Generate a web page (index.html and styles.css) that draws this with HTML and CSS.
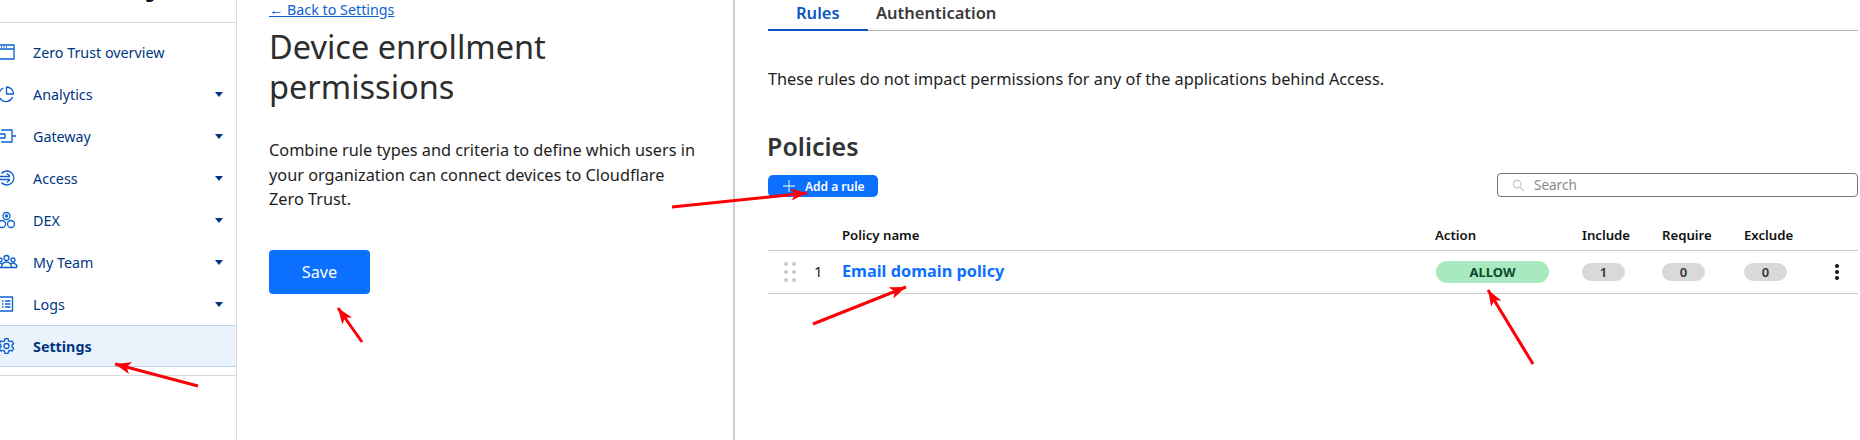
FILE: index.html
```html
<!DOCTYPE html>
<html lang="en">
<head>
  <meta charset="UTF-8" />
  <title>Device enrollment permissions</title>
  <link rel="stylesheet" href="styles.css">
</head>
<body>

<div class="layout">
  <nav class="sidebar">
    <div class="brand"><span class="brand-text">g</span></div>
    <ul class="nav-list">
      <li class="nav-item">
        <svg class="nav-icon" viewBox="0 0 24 24"><path d="M-6 5h20v14H-6z M-6 9h20 M1 7h1 M3.500 7h1 M6 7h1"/></svg>
        <span class="nav-label">Zero Trust overview</span>
      </li>
      <li class="nav-item">
        <svg class="nav-icon" viewBox="0 0 24 24"><path d="M3.500 6A7 7 0 1 0 12.500 15 M6.500 5v7h7a7 7 0 0 0-7-7z"/></svg>
        <span class="nav-label">Analytics</span><span class="caret"></span>
      </li>
      <li class="nav-item">
        <svg class="nav-icon" viewBox="0 0 24 24"><path d="M2 7v-1h10v12H2v-1 M12 12h4 M-6 10h11v4H-6"/></svg>
        <span class="nav-label">Gateway</span><span class="caret"></span>
      </li>
      <li class="nav-item">
        <svg class="nav-icon" viewBox="0 0 24 24"><path d="M1.500 7.500a7 7 0 1 1 0 9 M-2 10.500h12 M-2 13.500h12 M7 7.500l3 3 M7 16.500l3-3"/></svg>
        <span class="nav-label">Access</span><span class="caret"></span>
      </li>
      <li class="nav-item">
        <svg class="nav-icon" viewBox="0 0 24 24"><circle cx="6.500" cy="8" r="3.500"/><circle cx="6.500" cy="8" r="1"/><circle cx="2" cy="16" r="3.500"/><circle cx="11" cy="16" r="3.500"/></svg>
        <span class="nav-label">DEX</span><span class="caret"></span>
      </li>
      <li class="nav-item">
        <svg class="nav-icon" viewBox="0 0 24 24"><circle cx="0" cy="10" r="2"/><circle cx="6.500" cy="8" r="2.500"/><circle cx="13" cy="10" r="2"/><path d="M-4 17a4 4 0 0 1 7-2.500 M1.500 17a5 5 0 0 1 10 0 M10 14.500a4 4 0 0 1 7 2.500 M-4 17.500h21"/></svg>
        <span class="nav-label">My Team</span><span class="caret"></span>
      </li>
      <li class="nav-item">
        <svg class="nav-icon" viewBox="0 0 24 24"><path d="M-2 5h14.500v14H-2z M2 9h1.500 M5 9h5.500 M2 12h1.500 M5 12h5.500 M2 15h1.500 M5 15h5.500"/></svg>
        <span class="nav-label">Logs</span><span class="caret"></span>
      </li>
      <li class="nav-item nav-item-active">
        <svg class="nav-icon" viewBox="0 0 24 24"><circle cx="6.500" cy="12" r="2.500"/><path d="M4.440 6.900L4.940 4.660H8.060L8.560 6.900L9.890 7.670L12.070 6.980L13.630 9.680L11.950 11.230V12.770L13.630 14.320L12.070 17.020L9.890 16.330L8.560 17.100L8.060 19.340H4.940L4.440 17.100L3.110 16.330L0.930 17.020L-0.630 14.320L1.050 12.770V11.230L-0.630 9.680L0.930 6.980L3.110 7.670z"/></svg>
        <span class="nav-label">Settings</span>
      </li>
    </ul>
  </nav>

  <section class="intro">
    <a class="back-link" href="#">← Back to Settings</a>
    <h1>Device enrollment permissions</h1>
    <p class="intro-text">Combine rule types and criteria to define which users in your organization can connect devices to Cloudflare Zero Trust.</p>
    <button class="save-btn">Save</button>
  </section>

  <main class="content">
    <div class="tabs">
      <span class="tab tab-active">Rules</span>
      <span class="tab">Authentication</span>
    </div>
    <p class="note">These rules do not impact permissions for any of the applications behind Access.</p>
    <h2>Policies</h2>
    <div class="toolbar">
      <button class="add-btn">
        <svg class="plus-icon" viewBox="0 0 12 12"><path d="M6 0v12M0 6h12"/></svg>
        Add a rule
      </button>
      <div class="search">
        <svg class="search-icon" viewBox="0 0 14 14"><circle cx="5.500" cy="5.500" r="4"/><path d="M8.500 8.500L13 13"/></svg>
        <span>Search</span>
      </div>
    </div>
    <div class="row row-head">
      <span class="col-drag"></span>
      <span class="col-num"></span>
      <span class="col-name">Policy name</span>
      <span class="col-action">Action</span>
      <span class="col-include">Include</span>
      <span class="col-require">Require</span>
      <span class="col-exclude">Exclude</span>
    </div>
    <div class="row">
      <span class="col-drag"><span class="drag-dots"><i></i><i></i><i></i><i></i><i></i><i></i></span></span>
      <span class="col-num row-text">1</span>
      <a class="col-name policy-link row-text" href="#">Email domain policy</a>
      <span class="col-action"><span class="allow-pill">ALLOW</span></span>
      <span class="col-include"><span class="count-pill">1</span></span>
      <span class="col-require"><span class="count-pill">0</span></span>
      <span class="col-exclude"><span class="count-pill">0</span></span>
      <span class="kebab"><i></i><i></i><i></i></span>
    </div>
  </main>
</div>

<!-- red annotation arrows drawn over the screenshot -->
<svg class="arrows" viewBox="0 0 1860 440">
  <defs>
    <marker id="head" markerWidth="16" markerHeight="12" refX="16" refY="6" orient="auto" markerUnits="userSpaceOnUse">
      <path d="M0 0L16 6L0 12L4 6z"/>
    </marker>
  </defs>
  <path d="M198 386L115 364" marker-end="url(#head)"/>
  <path d="M362 342L338 308" marker-end="url(#head)"/>
  <path d="M672 207L807 193" marker-end="url(#head)"/>
  <path d="M813 324L906 287" marker-end="url(#head)"/>
  <path d="M1533 364L1488 290" marker-end="url(#head)"/>
</svg>

</body>
</html>
```

FILE: styles.css
```css
* {
  box-sizing: border-box;
}

html,
body {
  height: 100%;
}

body {
  margin: 0;
  font-family: 'Noto Sans', 'Open Sans', sans-serif;
  background: #ffffff;
  color: #1d1d1d;
  overflow: hidden;
  position: relative;
}

.layout {
  display: flex;
  height: 440px;
}

/* sidebar */
.sidebar {
  width: 237px;
  flex-shrink: 0;
  border-right: 1px solid #d9d9d9;
}

.brand {
  height: 23px;
  padding-left: 145px;
  border-bottom: 1px solid #d9d9d9;
  overflow: hidden;
}

.brand-text {
  display: block;
  margin-top: -16px;
  font-size: 16px;
  line-height: 16px;
  font-weight: 700;
  color: #111111;
}

.nav-list {
  list-style: none;
  margin: 0;
  padding: 8px 0;
  border-bottom: 1px solid #d9d9d9;
}

.nav-item {
  display: flex;
  align-items: center;
  height: 42px;
  padding-right: 13px;
  font-size: 14.300px;
  color: #003681;
}

.nav-icon {
  width: 24px;
  height: 24px;
  margin-right: 9px;
  overflow: visible;
  fill: none;
  stroke: #0a5fd0;
  stroke-width: 1.300;
  stroke-linejoin: round;
  flex-shrink: 0;
}

.nav-label {
  flex: 1;
}

.caret {
  width: 0;
  height: 0;
  border-left: 4.500px solid transparent;
  border-right: 4.500px solid transparent;
  border-top: 5px solid #003681;
}

.nav-item-active {
  background: #eaf2fc;
  border-top: 1px solid #bcd6f6;
  border-bottom: 1px solid #bcd6f6;
  font-weight: 700;
}

/* left column */
.intro {
  width: 498px;
  flex-shrink: 0;
  padding: 0 34px 0 32px;
  border-right: 2px solid #d0d0d0;
}

.back-link {
  display: block;
  font-size: 14.300px;
  line-height: 19px;
  color: #0b62d6;
}

h1 {
  margin: 8px 0 0;
  font-size: 32.500px;
  font-weight: 400;
  line-height: 40px;
  color: #2d2d2d;
}

.intro-text {
  margin: 31px 0 0;
  font-size: 16.300px;
  line-height: 24.500px;
}

.save-btn {
  display: block;
  margin-top: 38px;
  width: 101px;
  height: 44px;
  border: none;
  border-radius: 4px;
  background: #0b6fff;
  color: #ffffff;
  font-family: inherit;
  font-size: 16.300px;
}

/* right column */
.content {
  flex: 1;
  padding: 0 2px 0 33px;
}

.tabs {
  display: flex;
  height: 31px;
  border-bottom: 1px solid #b5b5b5;
}

.tab {
  padding-left: 8px;
  font-size: 16.500px;
  line-height: 25px;
  font-weight: 600;
  color: #3a3a3a;
}

.tab-active {
  width: 100px;
  height: 31px;
  padding-left: 28px;
  color: #0b55c4;
  border-bottom: 2px solid #0b55c4;
}

.note {
  margin: 36px 0 0;
  font-size: 16.300px;
  line-height: 24px;
}

h2 {
  margin: 38px 0 0 -1px;
  font-size: 25px;
  line-height: 34px;
  font-weight: 600;
  color: #333333;
}

.toolbar {
  display: flex;
  align-items: flex-end;
  justify-content: space-between;
  margin-top: 10px;
}

.add-btn {
  display: flex;
  align-items: center;
  gap: 10px;
  height: 22px;
  width: 110px;
  padding: 0 0 0 15px;
  border: none;
  border-radius: 5px;
  background: #0b6fff;
  color: #ffffff;
  font-family: inherit;
  font-size: 12px;
  font-weight: 600;
}

.plus-icon {
  width: 12px;
  height: 12px;
  fill: none;
  stroke: #bcd8ff;
  stroke-width: 1.300;
}

.search {
  display: flex;
  align-items: center;
  gap: 9px;
  width: 361px;
  height: 24px;
  padding-left: 14px;
  border: 1px solid #777777;
  border-radius: 4px;
  font-size: 13.500px;
  color: #8a8a8a;
}

.search-icon {
  width: 13px;
  height: 13px;
  fill: none;
  stroke: #c4c4c4;
  stroke-width: 1.200;
}

/* table */
.row {
  display: flex;
  align-items: center;
  height: 43px;
  border-bottom: 1px solid #cccccc;
  font-size: 15px;
}

.row-head {
  height: 37px;
  margin-top: 17px;
  padding-top: 5px;
  font-size: 13.200px;
  font-weight: 600;
  color: #111111;
}

.row-text {
  padding-bottom: 2px;
}

.col-drag {
  width: 46px;
  padding-left: 16px;
  flex-shrink: 0;
}

.col-num {
  width: 28px;
  flex-shrink: 0;
}

.col-name {
  width: 593px;
  flex-shrink: 0;
}

.policy-link {
  font-size: 16.300px;
  font-weight: 700;
  color: #0b6fff;
  text-decoration: none;
}

.col-action {
  width: 147px;
  flex-shrink: 0;
}

.col-include {
  width: 80px;
  flex-shrink: 0;
}

.col-require {
  width: 82px;
  flex-shrink: 0;
}

.col-exclude {
  width: 91px;
  flex-shrink: 0;
}

.allow-pill {
  display: block;
  width: 113px;
  height: 22px;
  margin-left: 1px;
  border-radius: 11px;
  background: #a8e9bf;
  color: #0f4a2a;
  font-size: 13px;
  font-weight: 700;
  line-height: 22px;
  text-align: center;
}

.count-pill {
  display: block;
  width: 43px;
  height: 18px;
  border-radius: 9px;
  background: #d9d9d9;
  color: #333333;
  font-size: 13px;
  font-weight: 600;
  line-height: 18px;
  text-align: center;
}

.drag-dots {
  display: grid;
  grid-template-columns: 4px 4px;
  gap: 4px;
}

.drag-dots i {
  width: 4px;
  height: 4px;
  border-radius: 50%;
  background: #c9c9c9;
}

.kebab {
  display: flex;
  flex-direction: column;
  gap: 2px;
}

.kebab i {
  width: 4px;
  height: 4px;
  border-radius: 50%;
  background: #111111;
}

/* annotation layer */
.arrows {
  position: absolute;
  left: 0;
  top: 0;
  width: 1860px;
  height: 440px;
  pointer-events: none;
}

.arrows > path {
  fill: none;
  stroke: #fb0007;
  stroke-width: 3;
}

.arrows marker path {
  fill: #fb0007;
}
```
